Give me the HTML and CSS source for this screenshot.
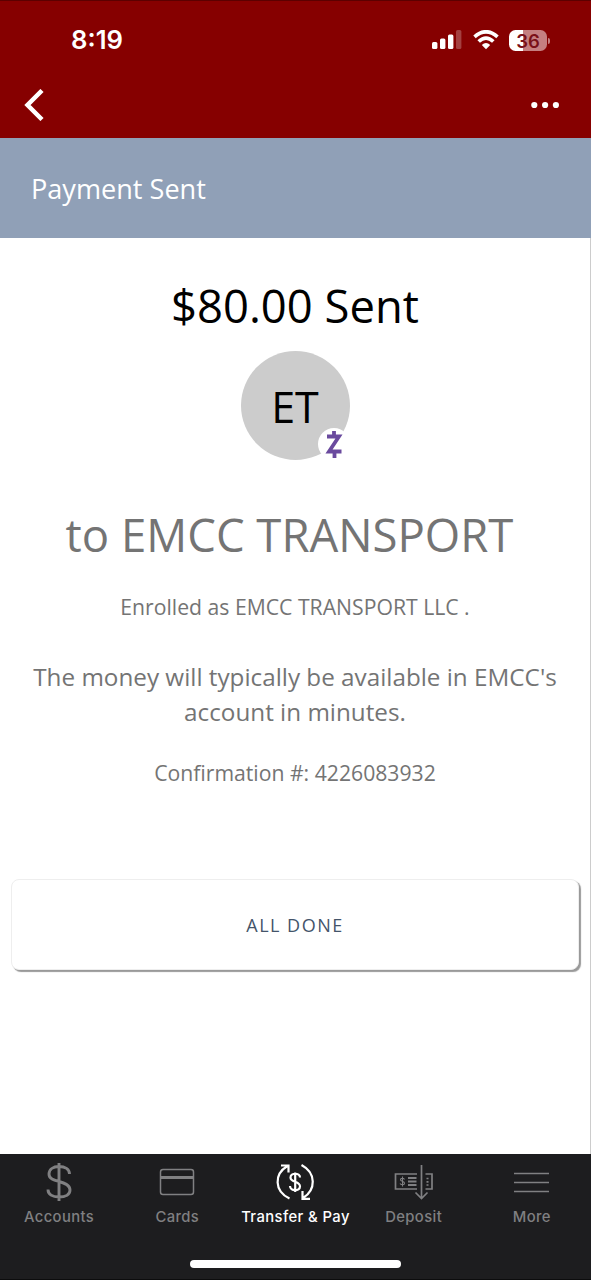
FILE: index.html
```html
<!DOCTYPE html>
<html lang="en">
<head>
	<title>Payment Sent</title>
	<meta charset="utf-8">
	<meta name="viewport" content="width=device-width, initial-scale=1">
	<link rel="stylesheet" href="styles.css">
</head>
<body>
<div class="phone">
	<header class="header">
		<div class="status">
			<span class="time">8:19</span>
			<div class="status-icons">
				<svg class="signal" width="30" height="20" viewBox="0 0 30 20">
					<rect x="0" y="12" width="5.4" height="7" rx="1.5"/>
					<rect x="8" y="8.500" width="5.4" height="10.500" rx="1.5"/>
					<rect x="16" y="4.500" width="5.4" height="14.500" rx="1.5"/>
					<rect x="24" y="0" width="5.4" height="19" rx="1.5" opacity=".25"/>
				</svg>
				<svg class="wifi" width="26" height="20" viewBox="0 0 26 20">
					<path d="M1.500 6.800Q13-3.200 24.500 6.800M5.700 11.500Q13 4.800 20.300 11.500" fill="none" stroke="#fff" stroke-width="3.700"/>
					<path d="M8.800 15Q13 11.200 17.200 15L13 19.200Z"/>
				</svg>
				<div class="battery"><span>36</span></div>
			</div>
		</div>
		<div class="toolbar">
			<svg width="20" height="32" viewBox="0 0 20 32"><path d="M18 1.5L3.5 16L18 30.5" fill="none" stroke="#fff" stroke-width="4.500"/></svg>
			<svg width="28" height="8" viewBox="0 0 28 8"><circle cx="3.3" cy="4" r="3.1"/><circle cx="14.1" cy="4" r="3.1"/><circle cx="24.9" cy="4" r="3.1"/></svg>
		</div>
	</header>

	<div class="title">Payment Sent</div>

	<main class="content">
		<h1 class="amount">$80.00 Sent</h1>
		<div class="avatar">
			<span>ET</span>
			<div class="badge">
				<svg width="18" height="29" viewBox="0 0 18 29"><path d="M2 6.500H14L4 21.500H16.500M9 1V6M9.500 22V28" fill="none" stroke="#6a4a9e" stroke-width="3.800"/></svg>
			</div>
		</div>
		<h2 class="payee">to EMCC TRANSPORT</h2>
		<p class="enrolled">Enrolled as EMCC TRANSPORT LLC .</p>
		<p class="message">The money will typically be available in EMCC's<br>account in minutes.</p>
		<p class="confirm">Confirmation #: 4226083932</p>
		<button class="done">ALL DONE</button>
	</main>

	<nav class="tabs">
		<ul>
			<li>
				<svg width="40" height="40" viewBox="0 0 40 40"><path d="M30.500 12C30.500 7 26 4.500 20 4.500S10 7.500 10 12C10 17 15 18.200 20 19.500S31 22.500 31 28C31 32.500 26.500 35 20 35S9 32.500 9 27.500M20 1V39" stroke-width="2.900"/></svg>
				<span>Accounts</span>
			</li>
			<li>
				<svg width="40" height="40" viewBox="0 0 40 40"><rect x="3.500" y="7.500" width="33" height="25" rx="2.500" stroke-width="1.500"/><path d="M4 15.500H36" stroke-width="3"/></svg>
				<span>Cards</span>
			</li>
			<li class="current">
				<svg width="40" height="40" viewBox="0 0 40 40"><path d="M14.500 36.500C-1 29-1 12 12.500 4M6 3.500H13.500V10.500M26.500 3C41.500 11 41 28 28 36M27.500 29V36.800H35" stroke-width="2.200"/><path d="M25 15.500C25 10.500 15.500 10.500 15.500 15.500C15.500 21 25 18.500 25 24.500C25 29.500 15 29.500 15 24M20.200 10.500V30" stroke-width="2.200"/></svg>
				<span>Transfer &amp; Pay</span>
			</li>
			<li>
				<svg width="40" height="40" viewBox="0 0 40 40"><path d="M23 12H1.500V27H23M31.500 12H38V27H31.500M27.500 3V36M21.500 30.500L27.500 36.500L33.500 30.500" stroke-width="1.700"/><path d="M14 16H22.500M14 19.500H22.500M14 23H22.500" stroke-width="1.900"/><path d="M10.500 17.500C9.500 15.800 6.500 16 6.500 17.700C6.500 19.500 10.500 19 10.500 21.200C10.500 23 7 23.200 6 21.500M8.500 14.500V24.500" stroke-width="1.100"/><path d="M32.500 16.500H34.500M32.500 19.800H34.500M32.500 23H34.500" stroke-width="1.700"/></svg>
				<span>Deposit</span>
			</li>
			<li>
				<svg width="40" height="40" viewBox="0 0 40 40"><path d="M2 11.500H37M2 20.500H37M2 29.500H37" stroke-width="1.700"/></svg>
				<span>More</span>
			</li>
		</ul>
		<div class="home"></div>
	</nav>
</div>
</body>
</html>
```

FILE: styles.css
```css
body,h1,h2,p,ul{margin:0;padding:0;}
ul{list-style-type:none;}
*{box-sizing:border-box;}
svg{display:block;}
h1,h2{font-weight:400;}
body{background:#fff;font-family:"Open Sans","Noto Sans",sans-serif;}
.phone{display:flex;flex-direction:column;width:591px;height:1280px;}

/* status bar + toolbar */
.header{height:138px;background:#860000;border-top:1px solid #5c0000;color:#fff;fill:#fff;}
.status{display:flex;justify-content:space-between;align-items:center;height:78px;padding:0 44px 0 71px;}
.time{font:600 25.700px/30px Inter,sans-serif;}
.status-icons{display:flex;align-items:center;}
.wifi{margin-left:11px;}
.battery{position:relative;width:38px;height:21px;margin-left:10px;border-radius:6.500px;background:linear-gradient(90deg,#fff 37%,#c57f80 37%);color:#7a1018;text-align:center;font:600 18.500px/22px Inter,sans-serif;}
.battery:after{content:"";position:absolute;right:-3px;top:8px;width:2px;height:6px;border-radius:0 2px 2px 0;background:#c57f80;}
.toolbar{display:flex;justify-content:space-between;align-items:center;height:52px;padding:0 32px 0 24px;}

.title{height:100px;padding-left:31px;background:#90a0b7;color:#fff;font-size:27.100px;line-height:102px;}

.content{display:flex;flex-direction:column;align-items:center;flex:1;border-right:1px solid #ccc;color:#747474;text-align:center;}
.amount{margin-top:36px;color:#000;font-size:45.400px;line-height:62px;}
.avatar{position:relative;width:109px;height:109px;margin-top:15px;border-radius:50%;background:#ccc;color:#000;font-size:43px;line-height:111px;}
.badge{position:absolute;right:0;bottom:0;display:flex;align-items:center;justify-content:center;width:32px;height:32px;border-radius:50%;background:#fff;}
.payee{margin-top:43px;padding-right:11px;font-size:45.500px;line-height:62px;}
.enrolled{margin-top:27px;font-size:21.200px;line-height:30px;}
.message{margin-top:37px;font-size:24.250px;line-height:35px;}
.confirm{margin-top:29px;font-size:21.200px;line-height:30px;}
.done{width:568px;height:91px;margin-top:91px;padding:0;border:1px solid #eee;border-radius:8px;background:#fff;box-shadow:2px 2px 1px #999;color:#44546a;font:18px/30px "Open Sans",sans-serif;letter-spacing:1.500px;}

/* bottom tabs */
.tabs{height:126px;background:#1d1d1f;border-bottom:1px solid #0c0c0d;color:#808082;}
.tabs ul{display:flex;padding-top:8px;}
.tabs li{display:flex;flex-direction:column;align-items:center;width:20%;font:500 14.800px/20px Inter,sans-serif;letter-spacing:.4px;}
.tabs svg{fill:none;stroke:currentColor;}
.tabs span{margin-top:5px;}
.tabs .current{color:#fff;}
.home{width:211px;height:8px;margin:33px auto 0;border-radius:4px;background:#fff;}
```
